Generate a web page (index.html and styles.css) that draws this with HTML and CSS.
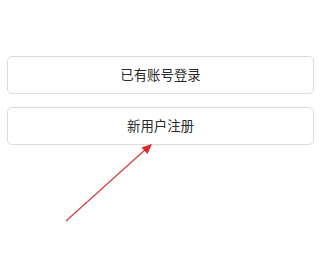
FILE: index.html
```html
<!DOCTYPE html>
<html lang="zh-CN">
<head>
<meta charset="utf-8">
<link rel="stylesheet" href="styles.css">
</head>
<body>
<div class="page">
  <div class="actions">
    <button class="btn">已有账号登录</button>
    <button class="btn">新用户注册</button>
  </div>
  <svg class="arrow" width="320" height="253" viewBox="0 0 320 253">
    <line x1="66" y1="221" x2="146" y2="149" stroke="#d8333a" stroke-width="1.1"/>
    <polygon points="152,144 141.5,147.5 147.5,154" fill="#e0262c"/>
  </svg>
</div>
</body>
</html>
```
FILE: styles.css
```css
html, body {
  margin: 0;
  padding: 0;
  background: #ffffff;
}
.page {
  position: relative;
  width: 320px;
  height: 253px;
  overflow: hidden;
}
.actions {
  display: flex;
  flex-direction: column;
  gap: 13px;
  padding: 56px 6px 0 7px;
}
.btn {
  box-sizing: border-box;
  width: 307px;
  height: 38px;
  margin: 0;
  border: 1px solid #dcdcdc;
  border-radius: 5px;
  background: #ffffff;
  color: #2a2a2a;
  font-family: "Noto Sans CJK SC", "Noto Sans", sans-serif;
  font-size: 13.4px;
  line-height: 1;
  padding: 0 0 1px 0;
}
.arrow {
  position: absolute;
  left: 0;
  top: 0;
  pointer-events: none;
}
```
